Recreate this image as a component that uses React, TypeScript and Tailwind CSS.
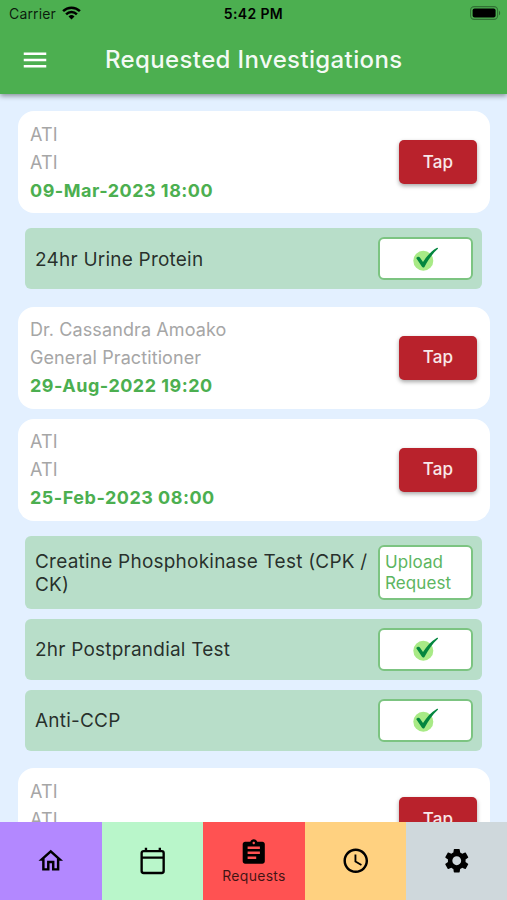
import React from 'react';
import { MdAccessTime, MdAssignment, MdMenu, MdOutlineHome, MdSettings } from 'react-icons/md';

interface Investigation {
  name: string;
  uploaded: boolean;
}

interface RequestGroup {
  id: number;
  doctor: string;
  role: string;
  date: string;
  items: Investigation[];
}

const requests: RequestGroup[] = [
  {
    id: 1,
    doctor: 'ATI',
    role: 'ATI',
    date: '09-Mar-2023 18:00',
    items: [{ name: '24hr Urine Protein', uploaded: true }]
  },
  {
    id: 2,
    doctor: 'Dr. Cassandra Amoako',
    role: 'General Practitioner',
    date: '29-Aug-2022 19:20',
    items: []
  },
  {
    id: 3,
    doctor: 'ATI',
    role: 'ATI',
    date: '25-Feb-2023 08:00',
    items: [
      { name: 'Creatine Phosphokinase Test (CPK / CK)', uploaded: false },
      { name: '2hr Postprandial Test', uploaded: true },
      { name: 'Anti-CCP', uploaded: true }
    ]
  },
  {
    id: 4,
    doctor: 'ATI',
    role: 'ATI',
    date: '25-Feb-2023 08:00',
    items: []
  }
];

const CalendarIcon: React.FC<{ className?: string }> = ({ className }) => (
  <svg className={className} viewBox="0 0 30 30" fill="none" stroke="currentColor" strokeWidth="2.4">
    <rect x="3.7" y="5.2" width="22.4" height="22.3" rx="2" />
    <path d="M3.7 11.8h22.4M8.1 1.8v4M22.2 1.8v4" />
  </svg>
);

const tabs = [
  { label: 'Home', icon: MdOutlineHome, color: 'bg-[#b388ff]' },
  { label: 'Calendar', icon: CalendarIcon, color: 'bg-[#b9f6ca]' },
  { label: 'Requests', icon: MdAssignment, color: 'bg-[#ff5252]', active: true },
  { label: 'History', icon: MdAccessTime, color: 'bg-[#ffd180]' },
  { label: 'Settings', icon: MdSettings, color: 'bg-[#cfd8dc]' }
];

const StatusBar = () => (
  <div className="grid h-[27px] grid-cols-3 items-center px-[8px] text-[14px] leading-none text-black/85">
    <div className="flex items-center gap-[6px] pl-px">
      <span className="tracking-[0.15px]">Carrier</span>
      <svg className="mb-[2px] h-[14px] w-[19px]" viewBox="0 0 19 14" fill="none" stroke="#000" strokeWidth="2.5">
        <path d="M1.1 5.1a12 12 0 0 1 16.8 0" />
        <path d="M4.1 8.3a7.7 7.7 0 0 1 10.8 0" />
        <path d="M9.5 13.6 6.5 10.5a4.3 4.3 0 0 1 6 0z" fill="#000" stroke="none" />
      </svg>
    </div>
    <span className="text-center font-semibold tracking-[0.35px] text-black">5:42 PM</span>
    <svg className="-mr-[2px] mb-px h-[14px] w-[31px] justify-self-end" viewBox="0 0 31 14">
      <rect x="0.6" y="0.6" width="27" height="12.8" rx="3.6" fill="none" stroke="#000" strokeOpacity="0.35" strokeWidth="1.1" />
      <rect x="2.6" y="2.6" width="23" height="8.8" rx="2" fill="#000" />
      <path d="M29 4.7c1.5.6 1.5 4 0 4.6z" fill="#000" fillOpacity="0.4" />
    </svg>
  </div>
);

const CheckMark = () => (
  <svg className="h-[26px] w-[28px]" viewBox="0 0 28 26">
    <circle cx="11.3" cy="14.7" r="10" fill="#a8ea86" />
    <path
      d="M4.3 12.2c.5-1.5 2.7-2 3.6-.8l3.1 4.5C14.6 10.4 19.2 4.9 24.7 1.9c.8-.4 1.7.1 1.2.9C20.7 7.4 16.2 13.9 12.6 20.7c-.6 1.1-2 1.1-2.6.1z"
      fill="#04863f"
    />
  </svg>
);

const RequestCard: React.FC<{ request: RequestGroup }> = ({ request }) => (
  <div className="flex h-[102px] items-center justify-between rounded-[16px] bg-white pl-[12px] pr-[13px]">
    <div className="pt-px text-[18px] leading-[28px] tracking-[0.1px] text-[#a6a6a6]">
      <p>{request.doctor}</p>
      <p>{request.role}</p>
      <p className="font-bold tracking-[0.5px] text-[#4caf50]">{request.date}</p>
    </div>
    <button className="h-[44px] w-[78px] rounded-[5px] bg-[#b9222c] pt-px text-[17px] font-medium tracking-[0.1px] text-white/90 shadow-[0_2px_4px_rgba(0,0,0,0.35)]">
      Tap
    </button>
  </div>
);

const InvestigationRow: React.FC<{ item: Investigation }> = ({ item }) => (
  <div className="flex items-center justify-between rounded-[6px] bg-[#b8dec9] py-[9px] pl-[10px] pr-[9px]">
    <p className="w-[338px] pt-px text-[19px] leading-[23px] tracking-[0.22px] text-black/80">{item.name}</p>
    {item.uploaded ? (
      <button className="flex h-[43px] w-[95px] items-center justify-center rounded-[6px] border-2 border-[#7cc481] bg-white">
        <CheckMark />
      </button>
    ) : (
      <button className="h-[55px] w-[95px] rounded-[6px] border-2 border-[#7cc481] bg-white pl-[5px] pt-px text-left text-[17px] leading-[21px] tracking-[0.1px] text-[#5cb560]">
        Upload Request
      </button>
    )}
  </div>
);

export default function App() {
  return (
    <div className="flex h-[900px] w-[507px] flex-col overflow-hidden bg-[#e3f0ff] font-['Inter',sans-serif]">
      <header className="relative z-10 h-[94px] shrink-0 bg-[#4caf50] shadow-[0_2px_5px_rgba(0,0,0,0.4)]">
        <StatusBar />
        <div className="flex h-[66px] items-center pl-[20px]">
          <MdMenu className="size-[30px] text-white" />
          <h1 className="ml-[55px] text-[24px] font-medium tracking-[0.37px] text-white/95">Requested Investigations</h1>
        </div>
      </header>

      <main className="flex min-h-0 flex-1 flex-col gap-[10px] overflow-hidden pl-[18px] pr-[17px] pt-[17px]">
        {requests.map(request => (
          <section key={request.id} className="shrink-0">
            <RequestCard request={request} />
            {request.items.length > 0 && (
              <div className="mb-[7.5px] ml-[7px] mr-[8px] mt-[15px] flex flex-col gap-[10px]">
                {request.items.map(item => (
                  <InvestigationRow key={item.name} item={item} />
                ))}
              </div>
            )}
          </section>
        ))}
      </main>

      {/* Bottom tabs, only the active one shows its label */}
      <nav className="grid h-[78px] shrink-0 grid-cols-[102px_101px_102px_101px_101px]">
        {tabs.map(({ label, icon: Icon, color, active }) => (
          <button key={label} aria-label={label} className={`flex flex-col items-center justify-center ${color}`}>
            <Icon className="size-[29.5px] text-black" />
            {active && <span className="text-[14px] leading-[17px] tracking-[0.3px] text-black/75">{label}</span>}
          </button>
        ))}
      </nav>
    </div>
  );
}
